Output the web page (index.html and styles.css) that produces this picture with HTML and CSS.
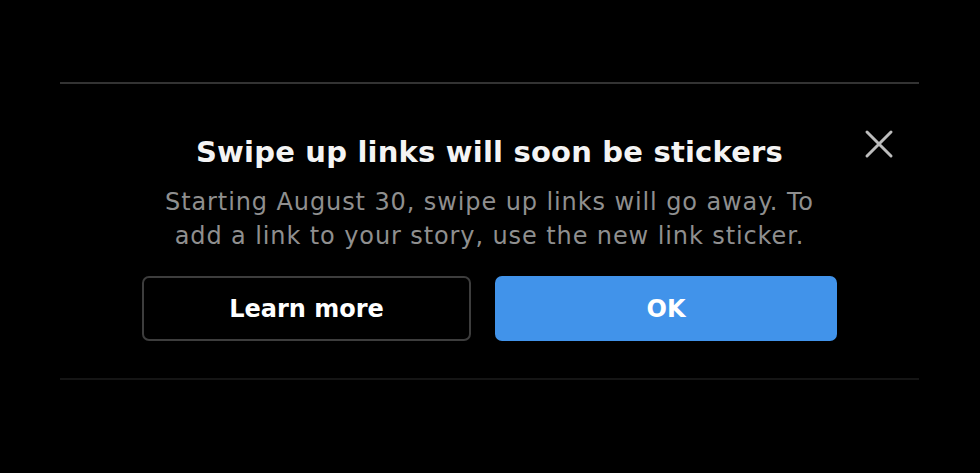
FILE: index.html
```html
<!DOCTYPE html>
<html lang="en">
<head>
<meta charset="utf-8">
<title>Swipe up links</title>
<link rel="stylesheet" href="styles.css">
</head>
<body>
<div class="page">
  <section class="sheet">
    <button class="close" aria-label="Close">
      <svg width="30" height="30" viewBox="0 0 30 30"><path d="M3 3 L27 27 M27 3 L3 27" stroke="#bdbdbd" stroke-width="3" stroke-linecap="round" fill="none"/></svg>
    </button>
    <h1 class="title">Swipe up links will soon be stickers</h1>
    <p class="body">Starting August 30, swipe up links will go away. To<br>add a link to your story, use the new link sticker.</p>
    <div class="actions">
      <button class="btn btn-outline">Learn more</button>
      <button class="btn btn-primary">OK</button>
    </div>
  </section>
</div>
</body>
</html>
```
FILE: styles.css
```css
html, body {
  margin: 0;
  padding: 0;
  background: #000;
}
body {
  font-family: "DejaVu Sans", sans-serif;
  height: 473px;
  overflow: hidden;
}
.page {
  padding: 82px 61px 0 60px;
}
.sheet {
  position: relative;
  border-top: 2px solid #333333;
  border-bottom: 2px solid #151515;
  padding: 50px 0 37px;
  display: flex;
  flex-direction: column;
  align-items: center;
}
.close {
  position: absolute;
  top: 45px;
  right: 25px;
  background: none;
  border: 0;
  padding: 0;
  width: 30px;
  height: 30px;
}
.title {
  margin: 0;
  color: #f4f4f4;
  font-size: 29px;
  font-weight: 700;
  line-height: 36px;
  letter-spacing: 0.2px;
}
.body {
  margin: 15px 0 0;
  color: #8f8f8f;
  font-size: 24px;
  font-weight: 400;
  line-height: 34px;
  letter-spacing: 0.9px;
  text-align: center;
}
.actions {
  display: flex;
  gap: 24px;
  margin-top: 23px;
}
.btn {
  height: 65px;
  border-radius: 7px;
  font-family: "DejaVu Sans", sans-serif;
  font-size: 24px;
  font-weight: 700;
  color: #fff;
}
.btn-outline {
  width: 329px;
  background: #000;
  border: 2px solid #3d3d3d;
}
.btn-primary {
  width: 342px;
  background: #4193ea;
  border: 0;
}
```
